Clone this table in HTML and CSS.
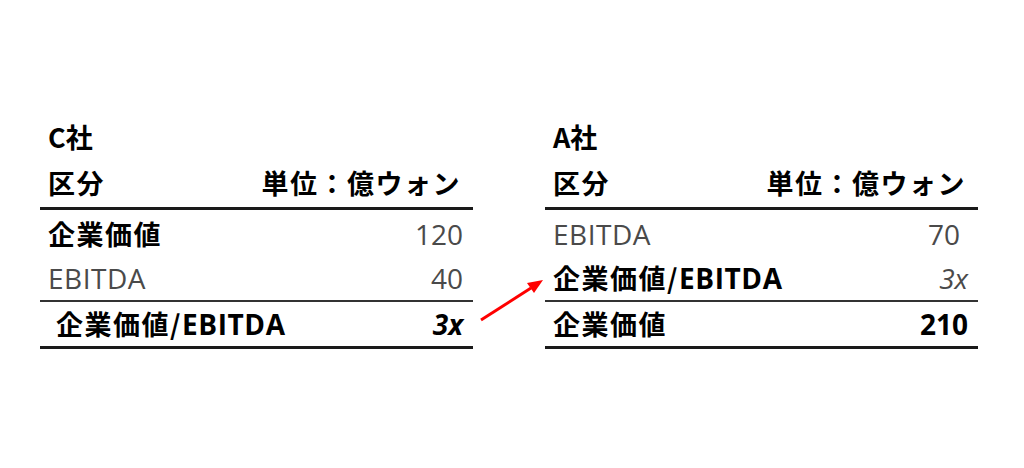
FILE: index.html
```html
<!DOCTYPE html>
<html lang="ja">
<head>
<meta charset="utf-8">
<link rel="stylesheet" href="styles.css">
</head>
<body>
<div class="page">
  <section class="panel">
    <div class="title">C社</div>
    <div class="header"><span>区分</span><span>単位：億ウォン</span></div>
    <div class="row first"><span class="label">企業価値</span><span class="num">120</span></div>
    <div class="row mid"><span class="label light">EBITDA</span><span class="num">40</span></div>
    <div class="row total"><span class="label indent">企業価値/<span class="latin">EBITDA</span></span><span class="num strong italic">3x</span></div>
  </section>
  <section class="panel">
    <div class="title">A社</div>
    <div class="header"><span>区分</span><span>単位：億ウォン</span></div>
    <div class="row first"><span class="label light">EBITDA</span><span class="num pad">70</span></div>
    <div class="row mid"><span class="label">企業価値/<span class="latin">EBITDA</span></span><span class="num italic">3x</span></div>
    <div class="row total"><span class="label">企業価値</span><span class="num strong">210</span></div>
  </section>
  <svg class="arrow" width="80" height="60" viewBox="0 0 80 60">
    <line x1="3" y1="52" x2="53" y2="20" stroke="#ff0000" stroke-width="3"/>
    <polygon points="65,12 49,15 56,25" fill="#ff0000"/>
  </svg>
</div>
</body>
</html>
```

FILE: styles.css
```css
html, body {
  margin: 0;
  padding: 0;
  background: #ffffff;
}
body {
  font-family: "Noto Sans CJK JP", "Noto Sans", sans-serif;
  color: #000;
}
.page {
  position: relative;
  display: flex;
  gap: 72px;
  padding: 122px 0 0 40px;
  width: 1024px;
  height: 468px;
  box-sizing: border-box;
}
.panel {
  width: 433px;
}
.title {
  height: 30px;
  line-height: 30px;
  font-size: 27px;
  font-weight: 700;
  padding-left: 8px;
}
.header {
  display: flex;
  justify-content: space-between;
  margin-top: 16px;
  height: 30px;
  line-height: 30px;
  padding: 0 12px 9px 8px;
  font-size: 27px;
  font-weight: 700;
  letter-spacing: 1.5px;
  border-bottom: 3px solid #1a1a1a;
}
.row {
  display: flex;
  justify-content: space-between;
  align-items: center;
  height: 44px;
  line-height: 44px;
  padding: 0 10px 0 8px;
}
.row.first {
  padding-top: 2px;
}
.row.mid {
  border-bottom: 2px solid #333;
}
.row.total {
  border-bottom: 3px solid #1a1a1a;
}
.label {
  font-size: 27px;
  font-weight: 700;
  letter-spacing: 1.5px;
}
.latin {
  font-family: "Open Sans", "Noto Sans", sans-serif;
  font-size: 28px;
  letter-spacing: 0.6px;
}
.label.light {
  font-family: "Open Sans", "Noto Sans", sans-serif;
  font-size: 28px;
  font-weight: 400;
  color: #4a4a4a;
  letter-spacing: 0.5px;
}
.num {
  font-family: "Open Sans", "Noto Sans", sans-serif;
  font-size: 28px;
  color: #4a4a4a;
}
.num.strong {
  font-weight: 700;
  color: #000;
}
.num.italic {
  font-style: italic;
}
.num.pad {
  padding-right: 8px;
}
.indent {
  padding-left: 8px;
}
.arrow {
  position: absolute;
  left: 478px;
  top: 268px;
}
```
